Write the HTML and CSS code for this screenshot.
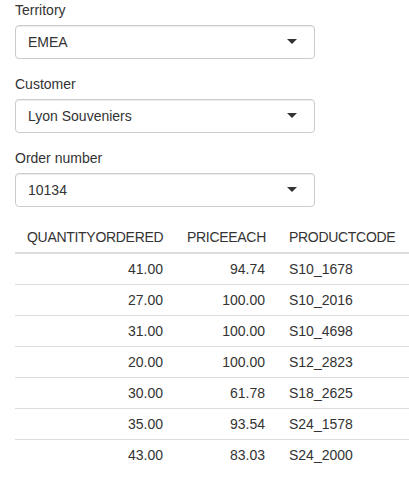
FILE: index.html
```html
<!DOCTYPE html>
<html>
<head>
<meta charset="utf-8">
<link rel="stylesheet" href="styles.css">
</head>
<body>
<div class="page">
  <div class="form-group">
    <label class="control-label">Territory</label>
    <div class="select-box"><span class="select-value">EMEA</span><span class="caret"></span></div>
  </div>
  <div class="form-group">
    <label class="control-label">Customer</label>
    <div class="select-box"><span class="select-value">Lyon Souveniers</span><span class="caret"></span></div>
  </div>
  <div class="form-group">
    <label class="control-label">Order number</label>
    <div class="select-box"><span class="select-value">10134</span><span class="caret"></span></div>
  </div>
  <table class="data-table">
    <colgroup>
      <col class="col-qty">
      <col class="col-price">
      <col class="col-code">
    </colgroup>
    <thead>
      <tr><th class="num">QUANTITYORDERED</th><th class="num">PRICEEACH</th><th>PRODUCTCODE</th></tr>
    </thead>
    <tbody>
      <tr><td class="num">41.00</td><td class="num">94.74</td><td>S10_1678</td></tr>
      <tr><td class="num">27.00</td><td class="num">100.00</td><td>S10_2016</td></tr>
      <tr><td class="num">31.00</td><td class="num">100.00</td><td>S10_4698</td></tr>
      <tr><td class="num">20.00</td><td class="num">100.00</td><td>S12_2823</td></tr>
      <tr><td class="num">30.00</td><td class="num">61.78</td><td>S18_2625</td></tr>
      <tr><td class="num">35.00</td><td class="num">93.54</td><td>S24_1578</td></tr>
      <tr><td class="num">43.00</td><td class="num">83.03</td><td>S24_2000</td></tr>
    </tbody>
  </table>
</div>
</body>
</html>
```

FILE: styles.css
```css
html, body {
  margin: 0;
  padding: 0;
  background: #fff;
}
body {
  font-family: "Liberation Sans", Arial, Helvetica, sans-serif;
  font-size: 14px;
  line-height: 20px;
  color: #333;
}
.page {
  padding: 0 15px;
}
.form-group {
  margin-bottom: 15px;
}
.control-label {
  display: inline-block;
  margin-bottom: 5px;
  font-weight: normal;
}
.select-box {
  box-sizing: border-box;
  width: 300px;
  height: 34px;
  display: flex;
  align-items: center;
  justify-content: space-between;
  padding: 6px 12px;
  border: 1px solid #ccc;
  border-radius: 4px;
  background: #fff;
  box-shadow: inset 0 1px 1px rgba(0, 0, 0, 0.075);
}
.select-value {
  color: #333;
}
.caret {
  width: 0;
  height: 0;
  margin-right: 5px;
  margin-top: -1px;
  border-style: solid;
  border-width: 5px 5px 0 5px;
  border-color: #333 transparent transparent transparent;
}
.data-table {
  width: 394px;
  table-layout: fixed;
  border-collapse: collapse;
  border-spacing: 0;
  margin-bottom: 20px;
}
.col-qty { width: 160px; }
.col-price { width: 102px; }
.col-code { width: 132px; }
.data-table th,
.data-table td {
  padding: 5px 12px;
  line-height: 20px;
  white-space: nowrap;
  text-align: left;
  vertical-align: top;
}
.data-table th {
  font-weight: normal;
  letter-spacing: -0.3px;
  border-bottom: 2px solid #ddd;
}
.data-table td {
  border-top: 1px solid #ddd;
}
.data-table tbody tr:first-child td {
  border-top: 0;
}
.data-table .num {
  text-align: right;
}
```
